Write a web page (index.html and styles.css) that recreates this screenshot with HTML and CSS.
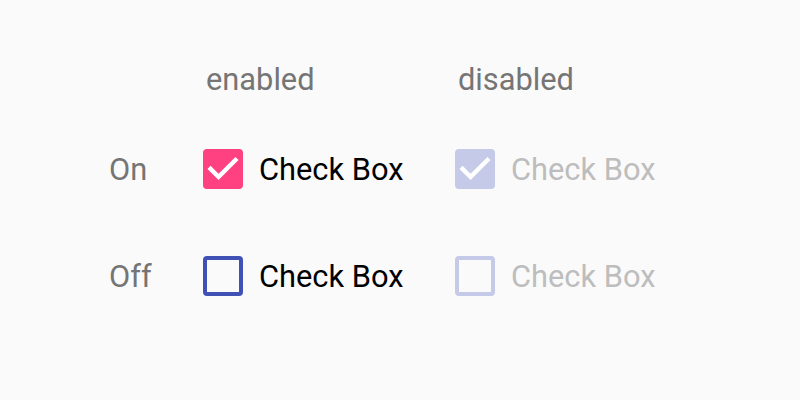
FILE: index.html
```html
<!DOCTYPE html>
<html>
<head>
<meta charset="utf-8">
<link rel="stylesheet" href="styles.css">
</head>
<body>
<div class="grid">
  <div class="cell"></div>
  <div class="cell head">enabled</div>
  <div class="cell head">disabled</div>

  <div class="cell label">On</div>
  <div class="cell item">
    <span class="box checked"><svg viewBox="3 3 18 18" width="40" height="40"><path d="M10 17l-5-5 1.41-1.41L10 14.17l7.59-7.59L19 8l-9 9z" fill="#fff"/></svg></span>
    <span class="text">Check Box</span>
  </div>
  <div class="cell item disabled">
    <span class="box checked"><svg viewBox="3 3 18 18" width="40" height="40"><path d="M10 17l-5-5 1.41-1.41L10 14.17l7.59-7.59L19 8l-9 9z" fill="#fff"/></svg></span>
    <span class="text">Check Box</span>
  </div>

  <div class="cell label">Off</div>
  <div class="cell item">
    <span class="box"></span>
    <span class="text">Check Box</span>
  </div>
  <div class="cell item disabled">
    <span class="box"></span>
    <span class="text">Check Box</span>
  </div>
</div>
</body>
</html>
```
FILE: styles.css
```css
html, body {
  margin: 0;
  background: #fafafa;
  font-family: Roboto, "Liberation Sans", sans-serif;
}
.grid {
  display: grid;
  grid-template-columns: 94px 252px auto;
  grid-template-rows: 80px 100px 114px;
  padding: 39px 0 0 109px;
  align-items: center;
}
.cell {
  display: flex;
  align-items: center;
  font-size: 30.8px;
}
.head {
  color: #757575;
  padding-left: 3px;
}
.label {
  color: #757575;
}
.item .text {
  color: #000;
  margin-left: 16px;
}
.box {
  box-sizing: border-box;
  width: 40px;
  height: 40px;
  border: 4px solid #3f51b5;
  border-radius: 4px;
  display: block;
  flex: none;
}
.box.checked {
  border: none;
  background: #ff4081;
}
.box svg {
  display: block;
}
.disabled .box {
  border-color: #c5cae9;
}
.disabled .box.checked {
  background: #c5cae9;
}
.disabled .text {
  color: #bdbdbd;
}
```
